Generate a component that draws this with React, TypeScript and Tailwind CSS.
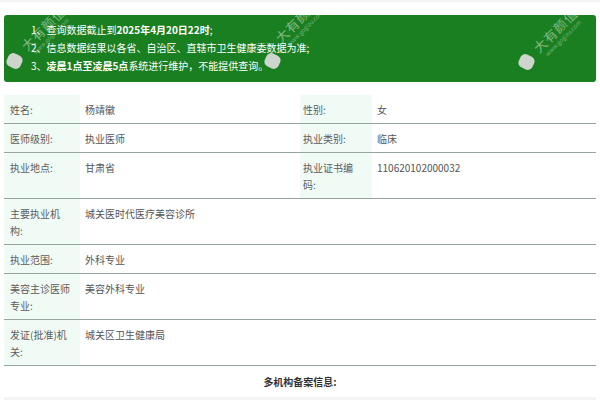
import React from "react";

const font = "font-['Noto_Sans_CJK_SC','Noto_Sans',sans-serif]";

function Label({ children, w }: { children: React.ReactNode; w: string }) {
  return (
    <div className={`${w} shrink-0 bg-[#f1fbf6] pl-[6px] pr-[9px] pt-[6px] pb-[5px] text-[#5c5c5c]`}>{children}</div>
  );
}

function RLabel({ children }: { children: React.ReactNode }) {
  return (
    <div className="w-[72px] shrink-0 bg-[#f1fbf6] pl-[3px] pr-[10px] pt-[6px] pb-[5px] text-[#5c5c5c]">{children}</div>
  );
}

function Value({ children, w }: { children: React.ReactNode; w: string }) {
  return <div className={`${w} pl-[5px] pt-[6px] pb-[5px] text-[#555]`}>{children}</div>;
}

function Mark({ pos }: { pos: string }) {
  return (
    <div className={`pointer-events-none absolute flex -translate-x-1/2 -translate-y-1/2 -rotate-[45deg] flex-col items-center whitespace-nowrap ${pos}`}>
      <span className="text-[13px] leading-[14px] tracking-[1px] text-white/45">大有颜值</span>
      <span className="text-[6px] leading-[7px] text-white/40">www.gogizu.com</span>
    </div>
  );
}

function Blob({ pos }: { pos: string }) {
  return <div className={`pointer-events-none absolute h-[14px] w-[15px] rotate-[25deg] rounded-[5px] bg-[#cdd5cd] ${pos}`} />;
}

export default function App() {
  return (
    <div className={`relative h-[400px] w-[600px] overflow-hidden bg-white ${font} text-[10px]`}>
      <div className="border-t-[2px] border-[#f4f4f4] px-[4px] pt-[13px]">
        <div className="relative h-[67px] overflow-hidden rounded-[3px] bg-[#1a7f21] pl-[27px] pt-[6px] leading-[18px] text-white">
          <div>
            1、查询数据截止到<b>2025年4月20日22时</b>;
          </div>
          <div>2、信息数据结果以各省、自治区、直辖市卫生健康委数据为准;</div>
          <div>
            3、<b>凌晨1点至凌晨5点</b>系统进行维护，不能提供查询。
          </div>
          <Mark pos="left-[42px] top-[16px]" />
          <Mark pos="left-[296px] top-[8px]" />
          <Mark pos="left-[554px] top-[18px]" />
          <Blob pos="left-[3px] top-[39px]" />
          <Blob pos="left-[261px] top-[39px]" />
          <Blob pos="left-[515px] top-[40px]" />
        </div>

        <div className="mt-[13px] leading-[17px]">
          <div className="flex border-b border-[#97a3a0]">
            <Label w="w-[76px]">姓名:</Label>
            <Value w="w-[220px]">杨靖徽</Value>
            <RLabel>性别:</RLabel>
            <Value w="flex-1">女</Value>
          </div>
          <div className="flex border-b border-[#97a3a0]">
            <Label w="w-[76px]">医师级别:</Label>
            <Value w="w-[220px]">执业医师</Value>
            <RLabel>执业类别:</RLabel>
            <Value w="flex-1">临床</Value>
          </div>
          <div className="flex border-b border-[#97a3a0]">
            <Label w="w-[76px]">执业地点:</Label>
            <Value w="w-[220px]">甘肃省</Value>
            <RLabel>执业证书编码:</RLabel>
            <Value w="flex-1">110620102000032</Value>
          </div>
          <div className="flex border-b border-[#97a3a0]">
            <Label w="w-[76px]">主要执业机构:</Label>
            <Value w="flex-1">城关医时代医疗美容诊所</Value>
          </div>
          <div className="flex border-b border-[#97a3a0]">
            <Label w="w-[76px]">执业范围:</Label>
            <Value w="flex-1">外科专业</Value>
          </div>
          <div className="flex border-b border-[#97a3a0]">
            <Label w="w-[76px]">美容主诊医师专业:</Label>
            <Value w="flex-1">美容外科专业</Value>
          </div>
          <div className="flex border-b border-[#97a3a0]">
            <Label w="w-[76px]">发证(批准)机关:</Label>
            <Value w="flex-1">城关区卫生健康局</Value>
          </div>
        </div>

        <div className="pt-[9px] text-center text-[10px] font-bold leading-[14px] text-[#333]">多机构备案信息:</div>
        <div className="mt-[8px] h-[10px] bg-[#f5f5f5]" />
      </div>
    </div>
  );
}
